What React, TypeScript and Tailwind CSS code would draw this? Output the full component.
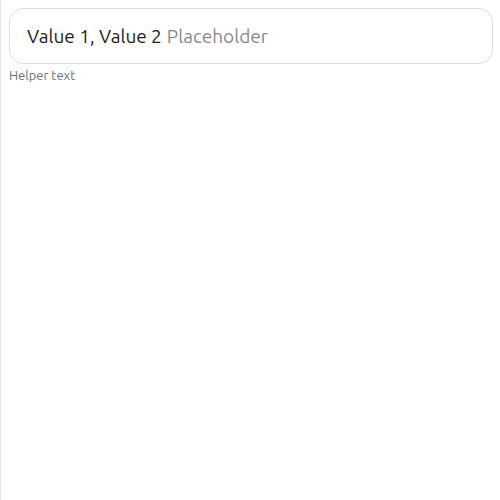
import React from 'react';

export default function App() {
  return (
    <div className="min-h-[500px] w-[500px] border-l border-[#e4e4e4] bg-white pl-2 pr-[7px] pt-2" style={{ fontFamily: 'Ubuntu, "Noto Sans", sans-serif' }}>
      <div className="flex h-14 items-center rounded-[14px] border border-[#dcdcdc] px-[17px]">
        <span className="text-[19px] text-[#1c1c1c]">Value 1, Value 2</span>
        <input
          className="ml-[5px] flex-1 bg-transparent text-[19px] text-[#1c1c1c] outline-none placeholder:text-[#8a8a8a]"
          placeholder="Placeholder"
        />
      </div>
      <p className="mt-[2px] text-[13px] text-[#707070]">Helper text</p>
    </div>
  );
}
